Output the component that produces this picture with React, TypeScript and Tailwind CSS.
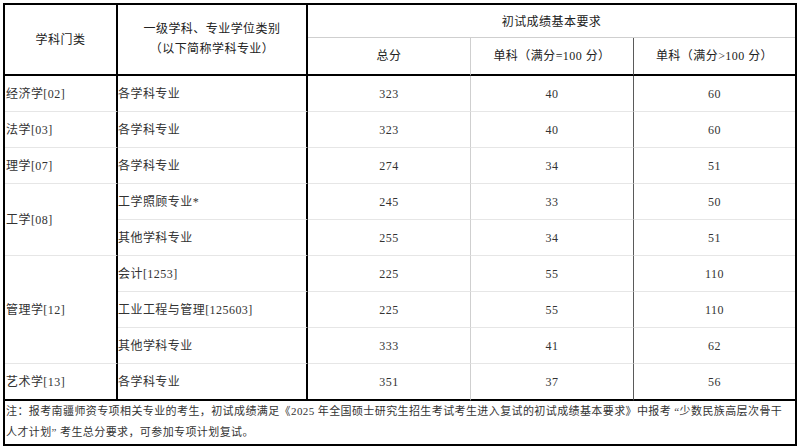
import React from "react";

const font = { fontFamily: '"Liberation Serif", "Noto Sans CJK SC", serif' };

type Row = { cat?: string; catSpan?: number; major: string; total: string; a: string; b: string; last?: boolean };

const rows: Row[] = [
  { cat: "经济学[02]", catSpan: 1, major: "各学科专业", total: "323", a: "40", b: "60" },
  { cat: "法学[03]", catSpan: 1, major: "各学科专业", total: "323", a: "40", b: "60" },
  { cat: "理学[07]", catSpan: 1, major: "各学科专业", total: "274", a: "34", b: "51" },
  { cat: "工学[08]", catSpan: 2, major: "工学照顾专业*", total: "245", a: "33", b: "50" },
  { major: "其他学科专业", total: "255", a: "34", b: "51" },
  { cat: "管理学[12]", catSpan: 3, major: "会计[1253]", total: "225", a: "55", b: "110" },
  { major: "工业工程与管理[125603]", total: "225", a: "55", b: "110" },
  { major: "其他学科专业", total: "333", a: "41", b: "62" },
  { cat: "艺术学[13]", catSpan: 1, major: "各学科专业", total: "351", a: "37", b: "56", last: true },
];

export default function App() {
  return (
    <div className="w-[800px] h-[448px] bg-white overflow-hidden pt-[3px] pl-[3px]" style={font}>
      <div className="w-[794px] border-2 border-black text-[12px] tracking-[0.45px] text-[#333]">
        <div className="grid grid-cols-[113px_190px_163px_163px_161px] grid-rows-[33px_38px_repeat(8,36px)_37px_43px]">
          {/* header */}
          <div className="row-span-2 border-r-2 border-b-2 border-black flex items-center justify-center text-[#222]">
            学科门类
          </div>
          <div className="row-span-2 border-r-2 border-b-2 border-black flex flex-col items-center justify-center leading-[20px] text-[#222] pb-[2px]">
            <span>一级学科、专业学位类别</span>
            <span>（以下简称学科专业）</span>
          </div>
          <div className="col-span-3 border-b border-[#cfcfcf] flex items-center justify-center text-[#222] pt-[2px]">
            初试成绩基本要求
          </div>
          <div className="border-r border-r-[#cfcfcf] border-b-2 border-b-black flex items-center justify-center text-[#222]">
            总分
          </div>
          <div className="border-r border-r-[#5a5a5a] border-b-2 border-b-black flex items-center justify-center text-[#222]">
            单科（满分=100 分）
          </div>
          <div className="border-b-2 border-black flex items-center justify-center text-[#222]">
            单科（满分&gt;100 分）
          </div>

          {/* body */}
          {rows.map((r, i) => {
            const bottom = r.last ? "border-b-2 border-b-black" : "border-b border-b-[#e6e6e6]";
            const catBottom =
              r.last ? "border-b-2 border-b-black" : "border-b border-b-[#e6e6e6]";
            return (
              <React.Fragment key={i}>
                {r.cat && (
                  <div
                    className={`border-r-2 border-r-black ${catBottom} flex items-center pl-[1px] ${
                      r.catSpan === 2 ? "row-span-2" : r.catSpan === 3 ? "row-span-3" : ""
                    }`}
                  >
                    {r.cat}
                  </div>
                )}
                <div className={`border-r-2 border-r-black ${bottom} flex items-center`}>{r.major}</div>
                <div className={`border-r border-r-[#cfcfcf] ${bottom} flex items-center justify-center`}>
                  {r.total}
                </div>
                <div className={`border-r border-r-[#5a5a5a] ${bottom} flex items-center justify-center`}>{r.a}</div>
                <div className={`${bottom} flex items-center justify-center`}>{r.b}</div>
              </React.Fragment>
            );
          })}

          {/* note */}
          <div className="col-span-5 overflow-hidden text-[11px] tracking-[0.4px] leading-[21px] pl-[1px] whitespace-nowrap">
            <div>注：报考南疆师资专项相关专业的考生，初试成绩满足《2025 年全国硕士研究生招生考试考生进入复试的初试成绩基本要求》中报考 “少数民族高层次骨干</div>
            <div>人才计划” 考生总分要求，可参加专项计划复试。</div>
          </div>
        </div>
      </div>
    </div>
  );
}
